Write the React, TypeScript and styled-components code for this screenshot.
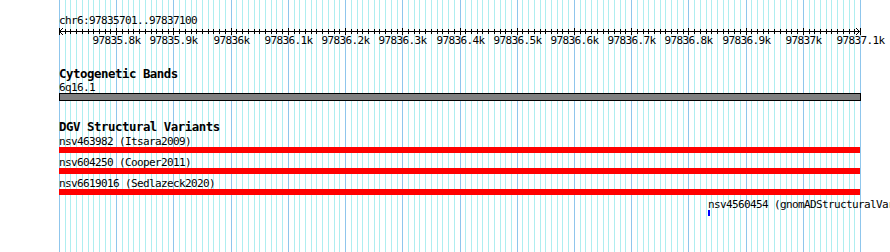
import React from 'react';
import styled, { createGlobalStyle } from 'styled-components';

const START = 97835700;
const END = 97837100;
const TRACK_WIDTH = 801;
const PAD_LEFT = 59;

const bpToX = (bp: number) => ((bp - START) * TRACK_WIDTH) / (END - START);

const GlobalStyle = createGlobalStyle`
    html, body {
        margin: 0;
        padding: 0;
        background: #ffffff;
        width: 890px;
        height: 252px;
        overflow: hidden;
    }
`;

const Panel = styled.div`
    position: relative;
    width: 890px;
    height: 252px;
    box-sizing: border-box;
    padding: 14px 0 0 ${PAD_LEFT}px;
    overflow: hidden;
    font-family: 'DejaVu Sans Mono', 'Liberation Mono', monospace;
    color: #000000;
`;

const GridSvg = styled.svg`
    position: absolute;
    left: 0;
    top: 0;
    z-index: 0;
`;

const Content = styled.div`
    position: relative;
    z-index: 1;
    width: ${TRACK_WIDTH}px;
`;

const SmallText = styled.div`
    font-size: 11px;
    letter-spacing: -0.62px;
    line-height: 13px;
    height: 13px;
    white-space: nowrap;
`;

const RulerSvg = styled.svg`
    display: block;
    overflow: visible;
`;

const Track = styled.div<{ $gap: number }>`
    margin-top: ${p => p.$gap}px;
`;

const TrackTitle = styled.div`
    font-size: 12.4px;
    letter-spacing: -0.47px;
    font-weight: bold;
    line-height: 12px;
    height: 13px;
    white-space: nowrap;
`;

const BandLabel = styled(SmallText)`
    line-height: 14px;
    height: 12px;
`;

const Band = styled.div`
    width: 802px;
    height: 8px;
    box-sizing: border-box;
    border: 1px solid #000000;
    background: #808080;
`;

const Rows = styled.div`
    margin-top: 1px;
`;

const Row = styled.div`
    height: 21px;
`;

const Feature = styled.div`
    display: flex;
    flex-direction: column;
    align-items: flex-start;
`;

const FeatureLabel = styled.div`
    font-size: 11px;
    letter-spacing: -0.62px;
    line-height: 13px;
    height: 12px;
    white-space: nowrap;
`;

const FeatureBar = styled.div<{ $color: string }>`
    height: 6px;
    background: ${p => p.$color};
`;

type Variant = { id: string; study: string; start: number; end: number; color: string };

const variants: Variant[] = [
    { id: 'nsv463982', study: 'Itsara2009', start: 97800000, end: 97900000, color: '#ff0000' },
    { id: 'nsv604250', study: 'Cooper2011', start: 97800000, end: 97900000, color: '#ff0000' },
    { id: 'nsv6619016', study: 'Sedlazeck2020', start: 97800000, end: 97900000, color: '#ff0000' },
    { id: 'nsv4560454', study: 'gnomADStructuralVariants', start: 97836834, end: 97836838, color: '#0000ff' },
];

function Grid() {
    const lines = [];
    for (let i = 0; i <= 140; i++) {
        const x = PAD_LEFT + Math.round((i * TRACK_WIDTH) / 140) + 0.5;
        const major = i % 10 === 0;
        lines.push(
            <line key={i} x1={x} x2={x} y1={0} y2={252}
                stroke={major ? '#8fc6ec' : '#aeeef0'} strokeWidth={1} />
        );
    }
    return (
        <GridSvg width={890} height={252}>
            {lines}
        </GridSvg>
    );
}

function Ruler() {
    const ticks = [];
    const labels = [];
    for (let i = 0; i <= 140; i++) {
        const x = Math.round((i * TRACK_WIDTH) / 140) + 0.5;
        const major = i % 10 === 0;
        ticks.push(
            <line key={i} x1={x} x2={x} y1={major ? 1 : 2} y2={major ? 8 : 7}
                stroke="#000" strokeWidth={1} />
        );
        if (major && i > 0) {
            const pos = START + i * 10;
            labels.push(
                <text key={'l' + i} x={x} y={17} textAnchor="middle" letterSpacing={-0.62}
                    fontFamily="'DejaVu Sans Mono', monospace" fontSize={11} fill="#000">
                    {String(pos / 1000) + 'k'}
                </text>
            );
        }
    }
    return (
        <RulerSvg width={TRACK_WIDTH} height={20}>
            <line x1={0} x2={TRACK_WIDTH} y1={4.5} y2={4.5} stroke="#000" strokeWidth={1} />
            <polyline points="4,1 0.5,4.5 4,8" fill="none" stroke="#000" strokeWidth={1} />
            <polyline points={`${TRACK_WIDTH - 4},1 ${TRACK_WIDTH - 0.5},4.5 ${TRACK_WIDTH - 4},8`}
                fill="none" stroke="#000" strokeWidth={1} />
            {ticks}
            {labels}
        </RulerSvg>
    );
}

function VariantRow({ v }: { v: Variant }) {
    const x1 = Math.max(0, bpToX(v.start));
    const x2 = Math.min(TRACK_WIDTH, bpToX(v.end));
    return (
        <Row>
            <Feature style={{ marginLeft: Math.round(x1) }}>
                <FeatureLabel>{v.id} ({v.study})</FeatureLabel>
                <FeatureBar $color={v.color} style={{ width: Math.max(2, Math.round(x2 - x1)) }} />
            </Feature>
        </Row>
    );
}

export default function App() {
    return (
        <>
            <GlobalStyle />
            <Panel>
                <Grid />
                <Content>
                    <SmallText>chr6:97835701..97837100</SmallText>
                    <Ruler />
                    <Track $gap={21}>
                        <TrackTitle>Cytogenetic Bands</TrackTitle>
                        <BandLabel>6q16.1</BandLabel>
                        <Band />
                    </Track>
                    <Track $gap={20}>
                        <TrackTitle>DGV Structural Variants</TrackTitle>
                        <Rows>
                            {variants.map(v => <VariantRow key={v.id} v={v} />)}
                        </Rows>
                    </Track>
                </Content>
            </Panel>
        </>
    );
}
